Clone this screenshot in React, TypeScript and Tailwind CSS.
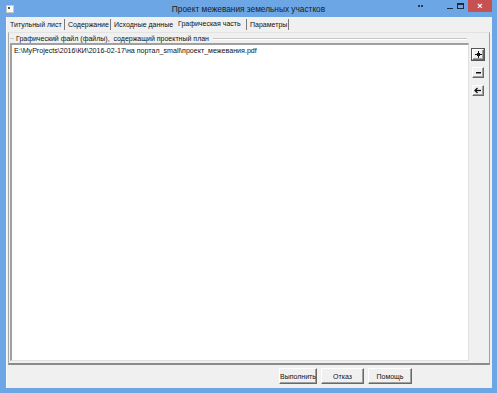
import React from "react";

const font = "font-['Liberation_Sans',Arial,sans-serif]";

function Btn3D({ children, className = "" }: { children?: React.ReactNode; className?: string }) {
  return (
    <div
      className={`flex items-center justify-center bg-[#f0f0f0] border-t border-l border-t-white border-l-white border-r border-b border-r-[#696969] border-b-[#696969] shadow-[inset_-1px_-1px_0_#a0a0a0] ${className}`}
    >
      {children}
    </div>
  );
}

export default function App() {
  return (
    <div className={`w-[497px] h-[393px] bg-[#6ca6e4] flex flex-col ${font} text-[#111]`}>
      {/* Title bar */}
      <div className="h-[17px] grid grid-cols-[1fr_auto_1fr] items-center">
        <div className="flex items-center pl-[6px]">
          <div className="w-[8px] h-[8px] bg-white border border-[#c8c8c8] flex flex-col">
            <div className="mt-[1px] ml-[1px] w-[2px] h-[2px] bg-[#555]" />
          </div>
        </div>
        <div className="text-[8.3px] text-[#1c1c1c] leading-none pt-[1px] whitespace-nowrap">Проект межевания земельных участков</div>
        <div className="flex items-start justify-end h-full">
          <div className="flex items-center gap-[1px] mr-[24px] mt-[5px]">
            <div className="w-[2px] h-[2px] bg-[#2a3a50]" />
            <div className="w-[2px] h-[2px] bg-[#2a3a50]" />
          </div>
          <div className="w-[6px] h-[1px] bg-[#1c2a40] mt-[8px] mr-[4px]" />
          <div className="w-[7px] h-[6px] border border-[#1c2a40] border-t-2 mt-[3px] mr-[4px]" />
          <div className="w-[24px] h-[12px] bg-[#c75050] mr-[5px] flex items-center justify-center text-white text-[9px] leading-none font-bold">
            ×
          </div>
        </div>
      </div>

      {/* Body */}
      <div className="flex-1 ml-[6px] mr-[5px] mb-[5px] bg-[#f0f0f0] border-l border-l-[#fafafa] flex flex-col">
        {/* Tabs */}
        <div className="h-[15px] flex items-stretch pl-[1px] text-[7px] leading-none whitespace-nowrap">
          <div className="w-[58px] pl-[2px] flex items-center">
            <span className="flex-1">Титульный лист</span>
            <div className="w-[1px] h-[11px] bg-[#7a7a7a] mr-[1px]" />
          </div>
          <div className="w-[46px] pl-[2px] flex items-center">
            <span className="flex-1">Содержание</span>
            <div className="w-[1px] h-[11px] bg-[#7a7a7a] mr-[1px]" />
          </div>
          <div className="w-[62px] pl-[2px] flex items-center">
            <span className="flex-1">Исходные данные</span>
          </div>
          <div className="w-[74px] pl-[4px] flex items-center pb-[2px] bg-[#f0f0f0]">
            <span className="flex-1">Графическая часть</span>
            <div className="w-[1px] h-[11px] bg-[#7a7a7a] mr-[1px] mt-[2px]" />
          </div>
          <div className="w-[41px] pl-[2px] flex items-center">
            <span className="flex-1">Параметры</span>
            <div className="w-[1px] h-[11px] bg-[#7a7a7a]" />
          </div>
        </div>

        {/* Tab panel */}
        <div className="h-[333px] mx-[1px] mr-[2px] border-t border-l border-t-[#e3e3e3] border-l-[#a8a8a8] border-r border-r-[#a0a0a0] border-b-2 border-b-[#8a8a8a] flex flex-col">
          {/* group label row */}
          <div className="h-[11px] flex items-center text-[7px] leading-none pl-[1px]">
            <div className="w-[4px] h-[1px] bg-[#c8c8c8]" />
            <span className="whitespace-pre px-[2px]">Графический файл (файлы),  содержащий проектный план</span>
            <div className="flex-1 mr-[22px] ml-[2px] h-[1px] bg-[#c8c8c8] shadow-[0_1px_0_#ffffff]" />
          </div>
          <div className="flex flex-1 pb-[2px]">
            {/* list */}
            <div className="w-[459px] ml-[1px] h-[318px] bg-white border-t-2 border-l-2 border-t-[#a0a0a0] border-l-[#a0a0a0] border-r border-b border-r-[#e0e0e0] border-b-[#e0e0e0]">
              <div className="pl-[2px] pt-[2px] text-[7.1px] leading-[9px] whitespace-nowrap">
                E:\MyProjects\2016\КИ\2016-02-17\на портал_small\проект_межевания.pdf
              </div>
            </div>
            {/* side buttons */}
            <div className="flex flex-col ml-[3px] pt-[6px] gap-[7px]">
              <Btn3D className="w-[12px] h-[11px] outline outline-1 outline-[#555]">
                <svg width="7" height="7" viewBox="0 0 7 7">
                  <path d="M3 0h1v7H3zM0 3h7v1H0z" fill="#111" />
                  <path d="M2 2h3v3H2z" fill="#111" />
                </svg>
              </Btn3D>
              <Btn3D className="w-[12px] h-[11px]">
                <svg width="7" height="7" viewBox="0 0 7 7">
                  <path d="M1 3h5v1.5H1z" fill="#111" />
                </svg>
              </Btn3D>
              <Btn3D className="w-[12px] h-[11px]">
                <svg width="8" height="7" viewBox="0 0 8 7">
                  <path d="M1 3.5h6" stroke="#111" strokeWidth="1.3" />
                  <path d="M3.5 1L1 3.5 3.5 6" stroke="#111" strokeWidth="1.3" fill="none" />
                </svg>
              </Btn3D>
            </div>
          </div>
        </div>

        {/* Bottom buttons */}
        <div className="flex-1 flex items-start pt-[3px] pl-[272px] gap-[4px] text-[7px] leading-none whitespace-nowrap">
          <Btn3D className="w-[38px] h-[16px]">Выполнить</Btn3D>
          <Btn3D className="w-[43px] h-[16px]">Отказ</Btn3D>
          <Btn3D className="w-[44px] h-[16px]">Помощь</Btn3D>
        </div>
      </div>
    </div>
  );
}
